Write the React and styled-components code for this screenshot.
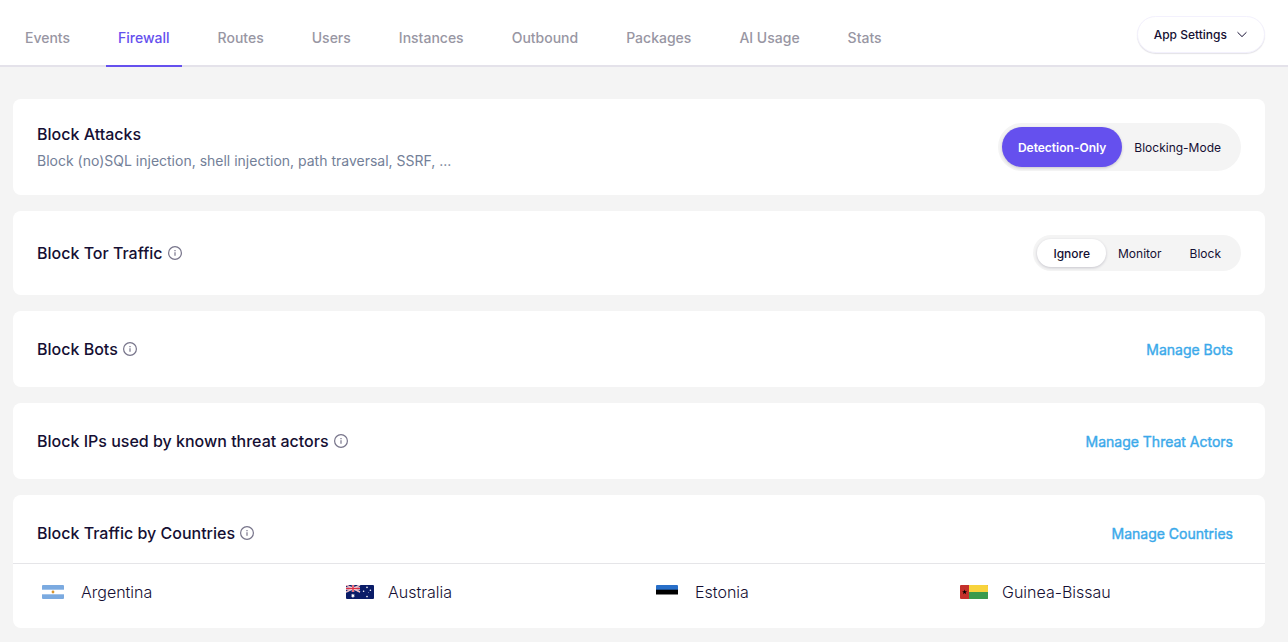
import React, { useState } from 'react';
import styled, { createGlobalStyle } from 'styled-components';

const GlobalStyle = createGlobalStyle`
    * {
        box-sizing: border-box;
    }

    body {
        margin: 0;
        background: #f4f4f4;
        color: #150f33;
        font-family: Inter, "Liberation Sans", sans-serif;
    }
`;

const Header = styled.header`
    display: flex;
    justify-content: space-between;
    padding: 0 23px 0 13px;
    background: #fff;
    box-shadow: inset 0 -2px #e4e2ea;
`;

const Tabs = styled.nav`
    display: flex;
    gap: 24px;
`;

const Tab = styled.a`
    padding: 28px 12px 17px;
    border-bottom: 2px solid ${props => (props.$active ? '#6550ee' : 'transparent')};
    color: ${props => (props.$active ? '#6550ee' : '#9896a3')};
    font-size: 14px;
    font-weight: 500;
    line-height: 20px;
    text-decoration: none;
`;

const SettingsButton = styled.button`
    display: flex;
    align-items: center;
    gap: 9px;
    height: 37px;
    margin-top: 16px;
    padding: 0 16px;
    border: 1px solid #f3f1fd;
    border-radius: 20px;
    background: #fff;
    box-shadow: 0 1px 1px rgba(21, 15, 51, 0.12);
    color: #150f33;
    font-family: inherit;
    font-size: 12px;
    font-weight: 500;
`;

const Main = styled.main`
    display: flex;
    flex-direction: column;
    gap: 16px;
    padding: 32px 23px 14px 13px;
`;

const Card = styled.section`
    border-radius: 8px;
    background: #fff;
`;

const CardRow = styled.div`
    display: flex;
    align-items: center;
    justify-content: space-between;
    padding: ${props => props.$padding || '24px'};
`;

const Title = styled.h2`
    display: flex;
    align-items: center;
    gap: 5px;
    margin: 0;
    font-size: 16px;
    font-weight: 500;
    line-height: 22px;
`;

const Description = styled.p`
    margin: 6px 0 0;
    color: #738098;
    font-size: 14px;
    line-height: 20px;
`;

const ManageLink = styled.a`
    padding: 2px 8px 0;
    color: #3ba9ea;
    font-size: 14px;
    font-weight: 400;
    line-height: 26px;
    text-decoration: none;
    -webkit-text-stroke: 0.4px;
`;

const Segments = styled.fieldset`
    display: flex;
    margin: 0;
    padding: 4px;
    border: 0;
    border-radius: 24px;
    background: #f4f4f4;
`;

const Segment = styled.label`
    padding: 2px 16px 0 ${props => (props.$active ? 16 : 12)}px;
    border-radius: 20px;
    background: ${props => (props.$active ? props.$fill : 'transparent')};
    box-shadow: ${props => (props.$active ? '0 1px 3px rgba(21, 15, 51, 0.2)' : 'none')};
    color: ${props => (props.$active && props.$large ? '#fff' : '#150f33')};
    font-size: 12px;
    font-weight: ${props => (props.$active ? (props.$large ? 600 : 500) : 400)};
    line-height: ${props => (props.$large ? 38 : 26)}px;
    cursor: pointer;
`;

const HiddenRadio = styled.input`
    position: absolute;
    opacity: 0;
    pointer-events: none;
`;

const Countries = styled.ul`
    display: grid;
    grid-template-columns: repeat(4, 1fr);
    gap: 24px;
    margin: 0;
    padding: 16px 24px 24px;
    border-top: 1px solid #e5e5e8;
    list-style: none;
`;

const Country = styled.li`
    display: flex;
    align-items: center;
    gap: 12px;
    font-size: 16px;
    font-weight: 300;
    line-height: 24px;
`;

const FlagBox = styled.span`
    display: flex;
    justify-content: center;
    width: 32px;
`;

const InfoIcon = () => (
    <svg width="14" height="14" viewBox="0 0 14 14" fill="none" stroke="#77748a" aria-hidden="true">
        <circle cx="7" cy="7" r="6.4" strokeWidth="1.2" />
        <path d="M7 6.2v3.6" strokeWidth="1.2" />
        <path d="M7 3.9v1.3" strokeWidth="1.2" />
    </svg>
);

const Chevron = () => (
    <svg width="12" height="12" viewBox="0 0 12 12" fill="none" stroke="#150f33" strokeWidth="1" aria-hidden="true">
        <path d="M1.8 3.5 6 7.6l4.2-4.1" strokeLinecap="round" strokeLinejoin="round" />
    </svg>
);

const ArgentinaFlag = () => (
    <svg width="22" height="14" viewBox="0 0 22 14" aria-hidden="true">
        <rect width="22" height="14" rx="1" fill="#7baae0" />
        <path d="M0 4.7h22v4.6H0z" fill="#fff" />
        <circle cx="11" cy="7" r="1.4" fill="#d8962f" />
    </svg>
);

const AustraliaFlag = () => (
    <svg width="28" height="14" viewBox="0 0 28 14" aria-hidden="true">
        <rect width="28" height="14" rx="1" fill="#0a1c68" />
        <path d="M0 0l14 7M14 0L0 7" stroke="#fff" strokeWidth="1.4" />
        <path d="M0 0l14 7M14 0L0 7" stroke="#dc4256" strokeWidth=".5" />
        <path d="M7 0v7M0 3.5h14" stroke="#fff" strokeWidth="2.4" />
        <path d="M7 0v7M0 3.5h14" stroke="#dc2f45" strokeWidth="1.4" />
        <path d="M7 8.6l.5 1.1 1.2-.2-.6 1.1.8.8-1.2.2-.1 1.1-.6-.8-.8.8-.1-1.2-1.1-.1.8-.9-.6-1 1.2.1z" fill="#fff" />
        <g fill="#fff">
            <circle cx="21" cy="2.4" r=".8" />
            <circle cx="17.6" cy="6.2" r=".8" />
            <circle cx="24.4" cy="5.2" r=".8" />
            <circle cx="22.6" cy="7.6" r=".4" />
            <circle cx="21" cy="11.6" r=".8" />
        </g>
    </svg>
);

const EstoniaFlag = () => (
    <svg width="22" height="14" viewBox="0 0 22 14" aria-hidden="true">
        <rect width="22" height="14" rx="1" fill="#fff" />
        <path d="M0 5V1q0-1 1-1h20q1 0 1 1v4z" fill="#286fc9" />
        <path d="M0 4.7h22v4.8H0z" fill="#000" />
    </svg>
);

const GuineaBissauFlag = () => (
    <svg width="28" height="14" viewBox="0 0 28 14" aria-hidden="true">
        <rect width="28" height="14" rx="1" fill="#c4302b" />
        <path d="M9 0h18q1 0 1 1v6H9z" fill="#f8d33c" />
        <path d="M9 7h19v6q0 1-1 1H9z" fill="#3a9a4c" />
        <path d="M4.6 4.6l.6 1.7h1.8L5.6 7.4l.5 1.8-1.5-1.1-1.5 1.1.5-1.8-1.4-1.1H4z" fill="#000" />
    </svg>
);

const tabs = ['Events', 'Firewall', 'Routes', 'Users', 'Instances', 'Outbound', 'Packages', 'AI Usage', 'Stats'];

const countries = [
    { name: 'Argentina', Flag: ArgentinaFlag },
    { name: 'Australia', Flag: AustraliaFlag },
    { name: 'Estonia', Flag: EstoniaFlag },
    { name: 'Guinea-Bissau', Flag: GuineaBissauFlag },
];

const SegmentedControl = ({ name, options, large, fill }) => {
    const [selected, setSelected] = useState(options[0]);

    return (
        <Segments>
            {options.map(option => (
                <Segment key={option} $active={option === selected} $large={large} $fill={fill}>
                    <HiddenRadio
                        type="radio"
                        name={name}
                        checked={option === selected}
                        onChange={() => setSelected(option)}
                    />
                    {option}
                </Segment>
            ))}
        </Segments>
    );
};

export default function App() {
    return (
        <>
            <GlobalStyle />
            <Header>
                <Tabs>
                    {tabs.map(tab => (
                        <Tab key={tab} href="#" $active={tab === 'Firewall'}>
                            {tab}
                        </Tab>
                    ))}
                </Tabs>
                <SettingsButton type="button">
                    App Settings
                    <Chevron />
                </SettingsButton>
            </Header>
            <Main>
                <Card>
                    <CardRow>
                        <div>
                            <Title>Block Attacks</Title>
                            <Description>Block (no)SQL injection, shell injection, path traversal, SSRF, ...</Description>
                        </div>
                        <SegmentedControl name="attacks" options={['Detection-Only', 'Blocking-Mode']} large fill="#6550ee" />
                    </CardRow>
                </Card>
                <Card>
                    <CardRow>
                        <Title>Block Tor Traffic <InfoIcon /></Title>
                        <SegmentedControl name="tor" options={['Ignore', 'Monitor', 'Block']} fill="#fff" />
                    </CardRow>
                </Card>
                <Card>
                    <CardRow>
                        <Title>Block Bots <InfoIcon /></Title>
                        <ManageLink href="#">Manage Bots</ManageLink>
                    </CardRow>
                </Card>
                <Card>
                    <CardRow>
                        <Title>Block IPs used by known threat actors <InfoIcon /></Title>
                        <ManageLink href="#">Manage Threat Actors</ManageLink>
                    </CardRow>
                </Card>
                <Card>
                    <CardRow $padding="24px 24px 16px">
                        <Title>Block Traffic by Countries <InfoIcon /></Title>
                        <ManageLink href="#">Manage Countries</ManageLink>
                    </CardRow>
                    <Countries>
                        {countries.map(({ name, Flag }) => (
                            <Country key={name}>
                                <FlagBox><Flag /></FlagBox>
                                {name}
                            </Country>
                        ))}
                    </Countries>
                </Card>
            </Main>
        </>
    );
}
